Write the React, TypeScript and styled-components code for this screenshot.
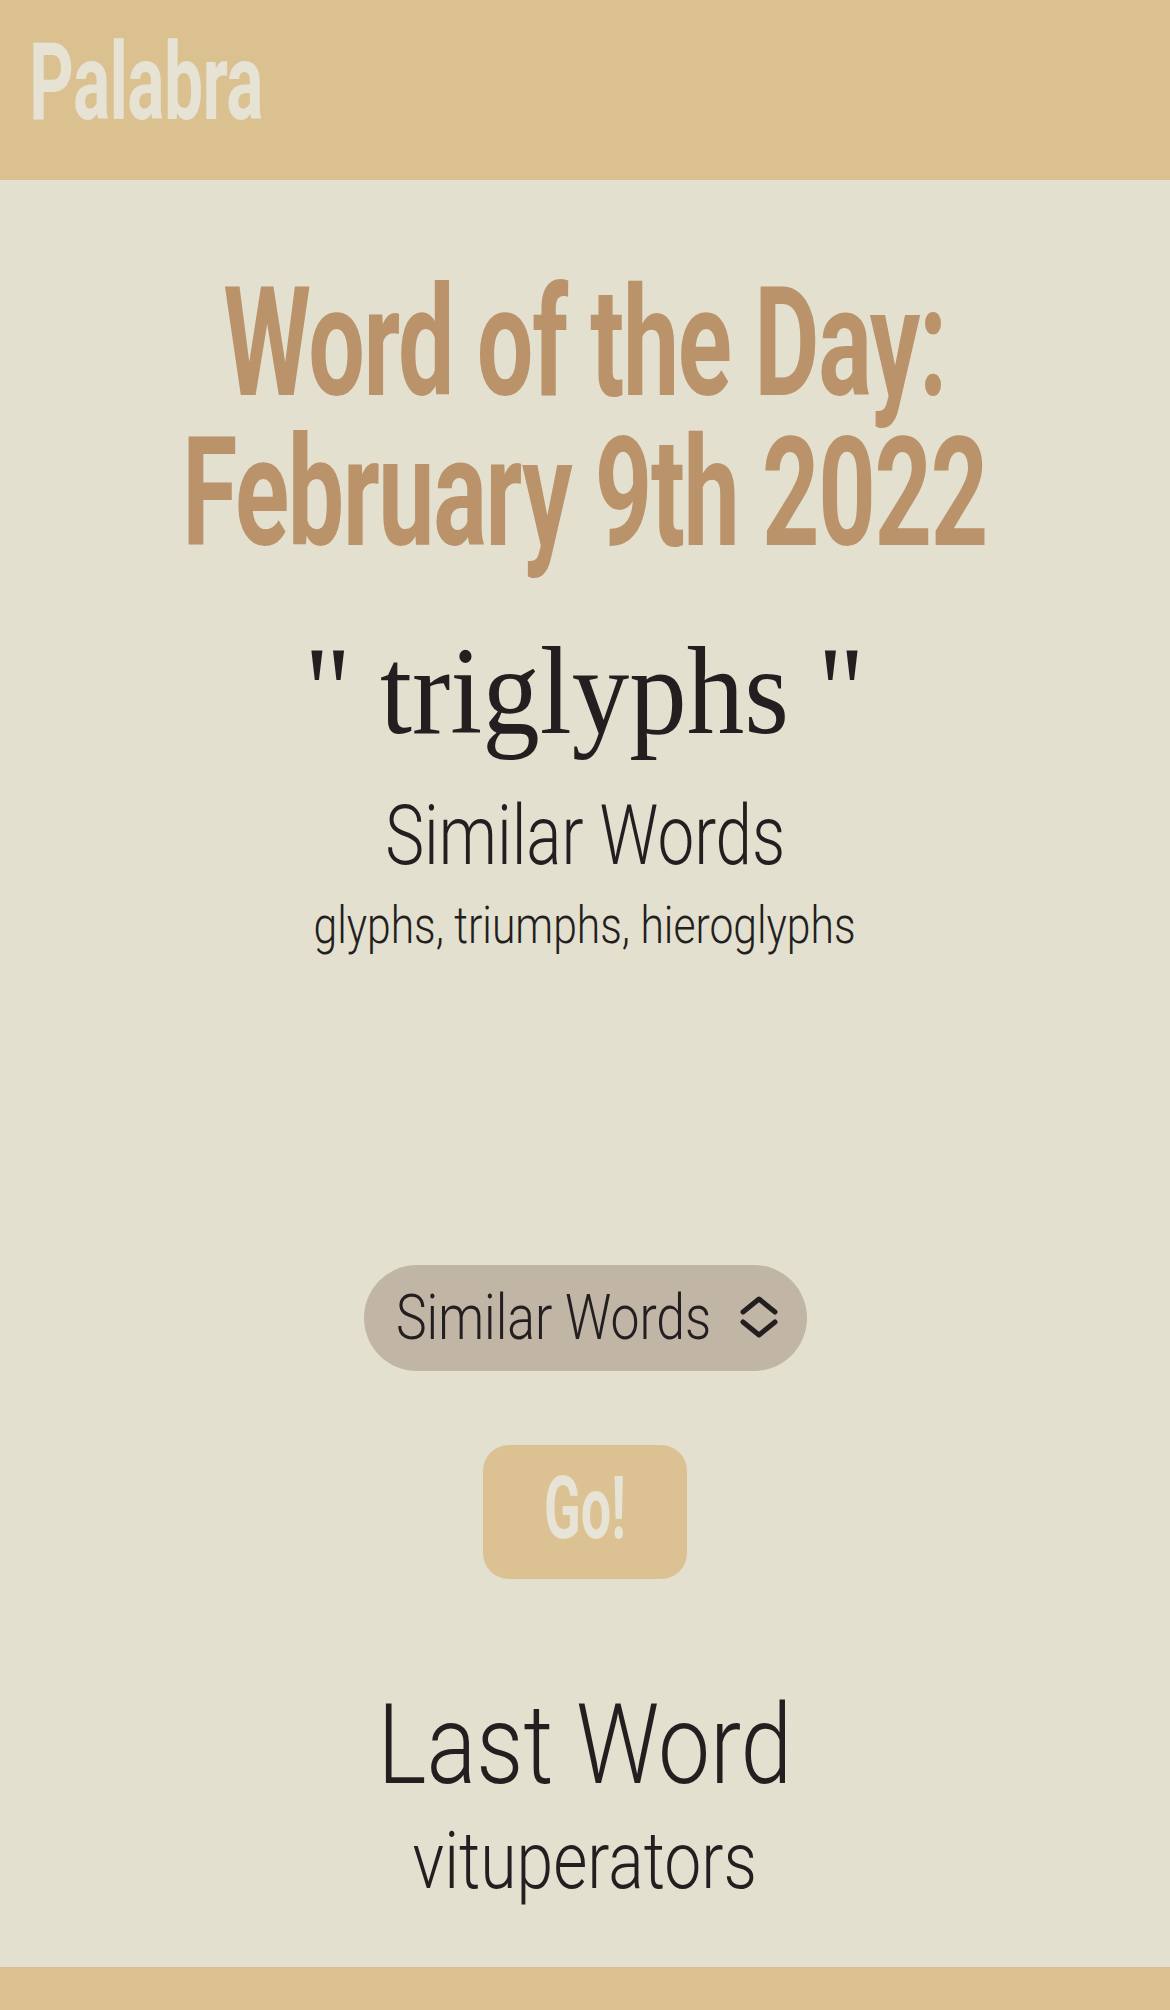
import React from "react";
import styled, { createGlobalStyle } from "styled-components";

const Global = createGlobalStyle`
  html, body { margin: 0; padding: 0; overflow-x: hidden; }
  body { background: #e3e0cf; font-family: Roboto, "Liberation Sans", sans-serif; color: #231f20; }
`;

const Page = styled.div`
  min-height: 100vh;
  display: flex;
  flex-direction: column;
  background: #e3e0cf;
`;

const Header = styled.header`
  height: 180px;
  background: #dbc190;
  display: flex;
  align-items: center;
  padding: 0 0 16px 29px;
  box-sizing: border-box;
`;

const Squeeze = styled.span<{ $x: number; $origin?: string }>`
  display: inline-block;
  white-space: nowrap;
  transform: scaleX(${(p) => p.$x});
  transform-origin: ${(p) => p.$origin ?? "center"};
`;

const Logo = styled.div`
  font-family: Roboto, sans-serif;
  font-weight: 700;
  font-size: 108px;
  line-height: 120px;
  color: #e6e2d4;
  letter-spacing: -1px;
`;

const Main = styled.main`
  flex: 1;
  display: flex;
  flex-direction: column;
  align-items: center;
  text-align: center;
`;

const Title = styled.h1`
  margin: 88px 0 0;
  font-family: Roboto, sans-serif;
  font-weight: 700;
  font-size: 152px;
  line-height: 150px;
  color: #bb936a;
  letter-spacing: -2px;
`;

const TitleText = styled(Squeeze)`
  white-space: pre;
`;

const Word = styled.div`
  margin-top: 53px;
  font-family: "Liberation Serif", "DejaVu Serif", serif;
  font-size: 125px;
  line-height: 140px;
  color: #231f20;
`;

const Subheading = styled.h2`
  margin: 30px 0 0;
  font-family: Roboto, sans-serif;
  font-weight: 300;
  font-size: 83px;
  line-height: 90px;
`;

const WordList = styled.p`
  margin: 15px 0 0;
  font-family: Roboto, sans-serif;
  font-weight: 300;
  font-size: 52px;
  line-height: 60px;
`;

const Select = styled.div`
  margin-top: 309px;
  width: 443px;
  height: 106px;
  box-sizing: border-box;
  border-radius: 53px;
  background: #c1b5a5;
  display: flex;
  align-items: center;
  padding: 0 28px 0 32px;
`;

const SelectText = styled.span`
  flex: 1;
  min-width: 0;
  text-align: left;
  font-family: Roboto, sans-serif;
  font-weight: 300;
  font-size: 63px;
  line-height: 106px;
  white-space: nowrap;
`;

const Chevron = styled.svg`
  width: 40px;
  height: 46px;
  flex-shrink: 0;
  margin-bottom: 2px;
`;

const GoButton = styled.button`
  margin-top: 74px;
  width: 204px;
  height: 134px;
  border: none;
  border-radius: 26px;
  background: #dcc192;
  color: #e7e3d6;
  font-family: Roboto, sans-serif;
  font-weight: 700;
  font-size: 87px;
  line-height: 134px;
  padding: 0 0 9px;
  display: flex;
  align-items: center;
  justify-content: center;
  cursor: pointer;
`;

const LastHeading = styled.h2`
  margin: 101px 0 0;
  font-family: Roboto, sans-serif;
  font-weight: 300;
  font-size: 112px;
  line-height: 130px;
`;

const LastWord = styled.p`
  margin: 6px 0 0;
  font-family: Roboto, sans-serif;
  font-weight: 300;
  font-size: 80px;
  line-height: 90px;
`;

const Footer = styled.footer`
  height: 43px;
  background: #dbc190;
  margin-top: 60px;
`;

export default function App() {
  return (
    <>
      <Global />
      <Page>
        <Header>
          <Logo>
            <Squeeze $x={0.645} $origin="left">Palabra</Squeeze>
          </Logo>
        </Header>
        <Main>
          <Title>
            <TitleText $x={0.66}>{"Word of the Day:\nFebruary 9th 2022"}</TitleText>
          </Title>
          <Word>
            <Squeeze $x={0.92}>" triglyphs "</Squeeze>
          </Word>
          <Subheading>
            <Squeeze $x={0.79}>Similar Words</Squeeze>
          </Subheading>
          <WordList>
            <Squeeze $x={0.82}>glyphs, triumphs, hieroglyphs</Squeeze>
          </WordList>
          <Select role="combobox" aria-label="Mode">
            <SelectText>
              <Squeeze $x={0.82} $origin="left">Similar Words</Squeeze>
            </SelectText>
            <Chevron viewBox="0 0 40 46" fill="none" stroke="#231f20" strokeWidth={5} strokeLinecap="round" strokeLinejoin="round">
              <path d="M4 18 L20 5 L36 18" />
              <path d="M4 28 L20 41 L36 28" />
            </Chevron>
          </Select>
          <GoButton type="button">
            <Squeeze $x={0.62}>Go!</Squeeze>
          </GoButton>
          <LastHeading>
            <Squeeze $x={0.83}>Last Word</Squeeze>
          </LastHeading>
          <LastWord>
            <Squeeze $x={0.825}>vituperators</Squeeze>
          </LastWord>
        </Main>
        <Footer />
      </Page>
    </>
  );
}
